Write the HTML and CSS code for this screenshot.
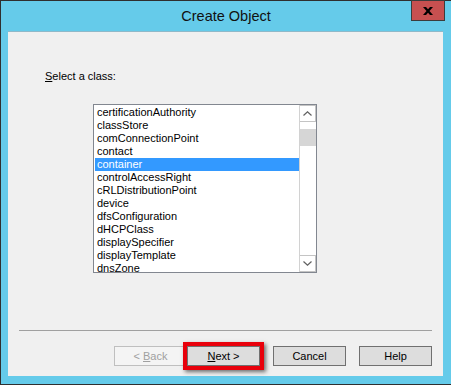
FILE: index.html
```html
<!DOCTYPE html>
<html lang="en">
<head>
    <meta charset="UTF-8">
    <title>Create Object</title>
    <link rel="stylesheet" href="styles.css">
</head>
<body>
    <div class="window">
        <div class="titlebar">
            <span></span>
            <span class="title">Create Object</span>
            <button class="close" aria-label="Close">
                <svg width="10" height="8" viewBox="0 0 10 8">
                    <path d="M0 0h3l2 2.3L7 0h3L6.5 4 10 8H7L5 5.7 3 8H0l3.5-4z" fill="#000"/>
                </svg>
            </button>
        </div>

        <div class="client">
            <p class="prompt"><u>S</u>elect a class:</p>

            <div class="listbox">
                <ul class="items">
                    <li>certificationAuthority</li>
                    <li>classStore</li>
                    <li>comConnectionPoint</li>
                    <li>contact</li>
                    <li class="selected">container</li>
                    <li>controlAccessRight</li>
                    <li>cRLDistributionPoint</li>
                    <li>device</li>
                    <li>dfsConfiguration</li>
                    <li>dHCPClass</li>
                    <li>displaySpecifier</li>
                    <li>displayTemplate</li>
                    <li>dnsZone</li>
                </ul>
                <div class="scrollbar">
                    <div class="sb-btn">
                        <svg width="9" height="5" viewBox="0 0 9 5"><path d="M0.5 4.5L4.5 0.8L8.5 4.5" fill="none" stroke="#606060" stroke-width="1.2"/></svg>
                    </div>
                    <div class="sb-track">
                        <div class="sb-thumb"></div>
                    </div>
                    <div class="sb-btn">
                        <svg width="9" height="5" viewBox="0 0 9 5"><path d="M0.5 0.5L4.5 4.2L8.5 0.5" fill="none" stroke="#606060" stroke-width="1.2"/></svg>
                    </div>
                </div>
            </div>

            <div class="separator"></div>

            <div class="buttons">
                <div class="wizard-nav">
                    <button class="btn" disabled>&lt; <u>B</u>ack</button>
                    <button class="btn next"><u>N</u>ext &gt;</button>
                </div>
                <button class="btn">Cancel</button>
                <button class="btn">Help</button>
            </div>
        </div>
    </div>
</body>
</html>
```

FILE: styles.css
```css
body {
    margin: 0;
    font-family: "Liberation Sans", Arial, sans-serif;
    font-size: 11px;
    color: #000;
}
.window {
    width: 450px;
    height: 383px;
    background-color: #65cbea;
    border: 1px solid #2f2f2f;
    border-right: none;
}
.titlebar {
    display: grid;
    grid-template-columns: 1fr auto 1fr;
    height: 30px;
    margin-top: -1px;
    padding-top: 1px;
}
.title {
    font-size: 14.5px;
    line-height: 30px;
    color: #111;
}
.close {
    justify-self: end;
    align-self: start;
    width: 34px;
    height: 21px;
    margin: -1px 6px 0 0;
    padding: 0;
    background-color: #c75050;
    border: 1px solid #3c3c3c;
    display: flex;
    align-items: center;
    justify-content: center;
}
.client {
    margin: 0 8px 0 7px;
    height: 344px;
    background-color: #f0f0f0;
    border-top: 1px solid #8fb9c9;
    display: flex;
    flex-direction: column;
}
.prompt {
    margin: 38px 0 0 37px;
    line-height: 13px;
}
.listbox {
    display: flex;
    width: 222px;
    height: 167px;
    margin: 21px 0 0 85px;
    background-color: #fff;
    border: 1px solid #828790;
    overflow: hidden;
}
.items {
    flex: 1;
    list-style: none;
    margin: 0;
    padding: 1px 0 0 1px;
    overflow: hidden;
}
.items li {
    height: 13px;
    line-height: 13px;
    padding-left: 2px;
    white-space: nowrap;
}
.items li.selected {
    background-color: #3399ff;
    color: #fff;
}
.scrollbar {
    width: 17px;
    display: flex;
    flex-direction: column;
    border-left: 1px solid #d2d2d2;
    box-sizing: border-box;
}
.sb-btn {
    height: 17px;
    border: 1px solid #c4c4c4;
    border-left: none;
    box-sizing: border-box;
    display: flex;
    align-items: center;
    justify-content: center;
}
.sb-track {
    flex: 1;
    padding-top: 7px;
}
.sb-thumb {
    height: 17px;
    background-color: #d6d6d6;
}
.separator {
    margin: 57px 11px 0 11px;
    border-top: 1px solid #a0a0a0;
}
.buttons {
    display: flex;
    justify-content: flex-end;
    gap: 13px;
    margin: 15px 11px 0 0;
}
.wizard-nav {
    display: flex;
    position: relative;
}
.btn {
    width: 73px;
    height: 20px;
    padding: 0;
    font-family: "Liberation Sans", Arial, sans-serif;
    font-size: 11px;
    color: #000;
    background-color: #dddddd;
    border: 1px solid #707070;
}
.btn:disabled {
    color: #a0a0a0;
    background-color: #f4f4f4;
    border-color: #bfbfbf;
}
.next {
    position: relative;
}
/* red highlight drawn round the Next button */
.next::after {
    content: "";
    position: absolute;
    left: -5px;
    top: -5px;
    right: -5px;
    bottom: -5px;
    border: 4px solid #e8000b;
    box-shadow: 2px 2px 4px rgba(0, 0, 0, 0.55);
}
```
